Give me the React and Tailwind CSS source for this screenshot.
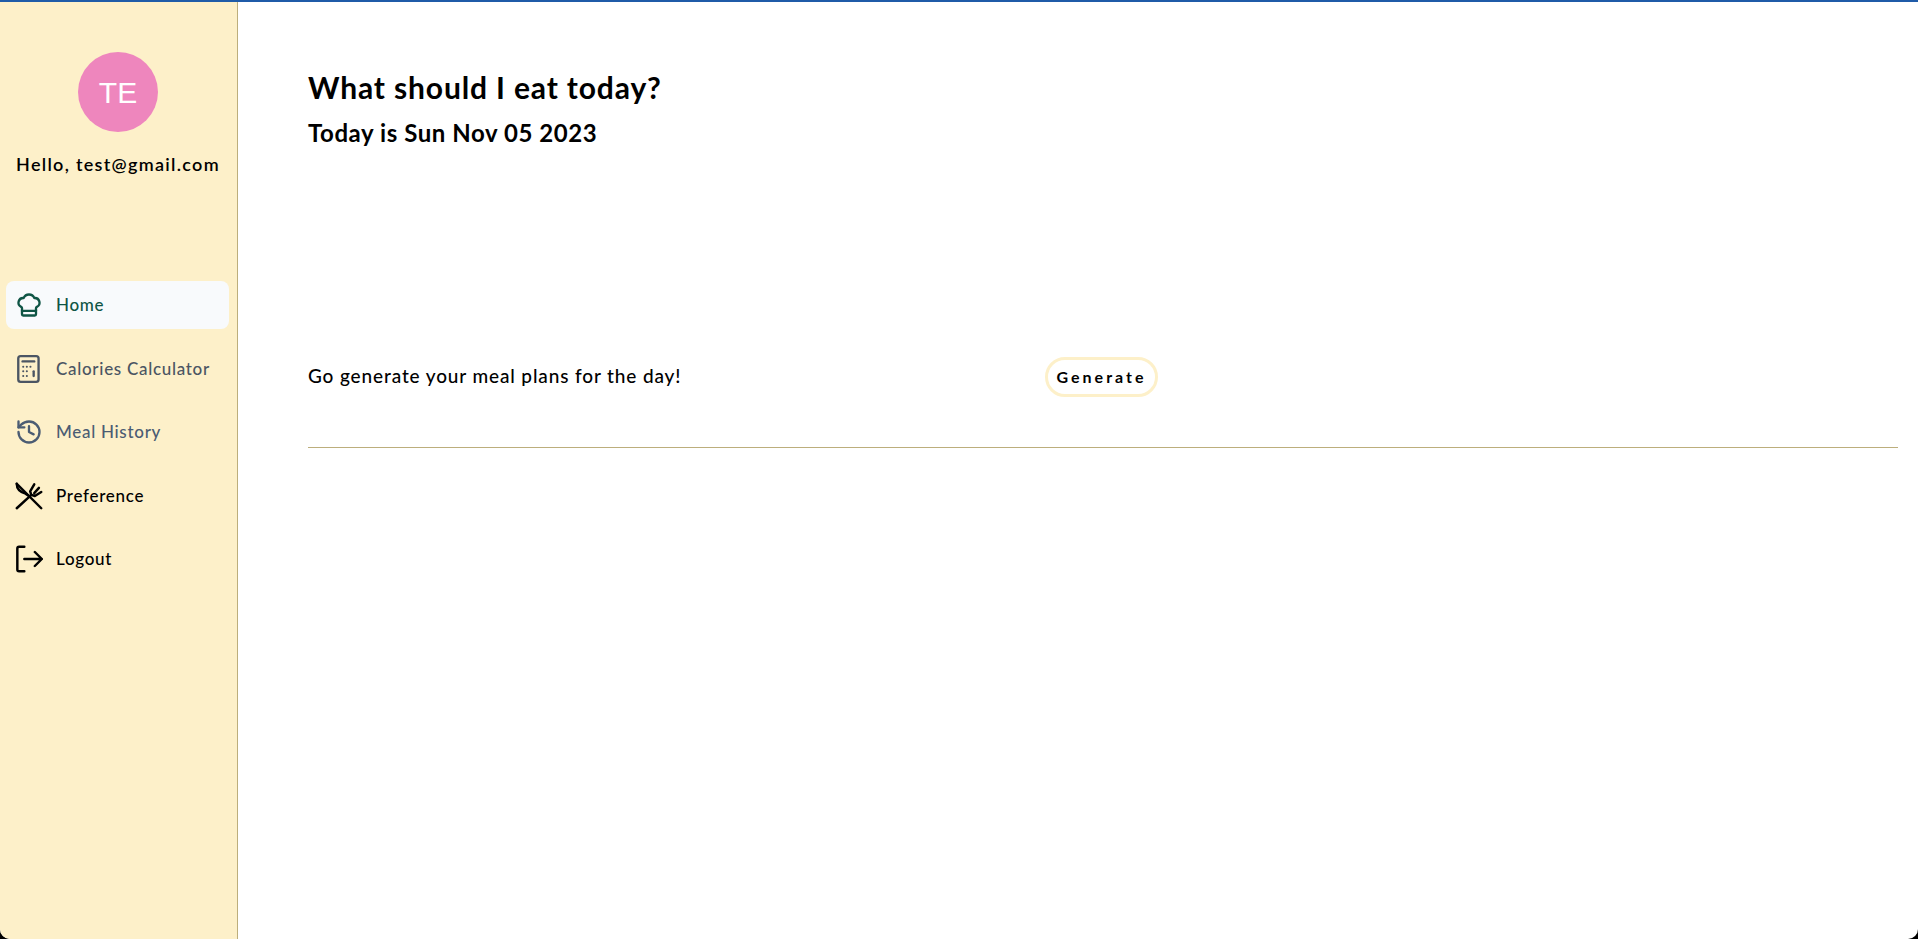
import React from "react";
import { ChefHat, History } from "lucide-react";

const CalculatorIcon = props => (
  <svg viewBox="0 0 24 24" fill="none" stroke="currentColor" strokeWidth="2" strokeLinecap="round" {...props}>
    <rect x="2.8" y="1" width="17.4" height="22" rx="2" />
    <path d="M6.5 5.5h10" />
    <path strokeWidth="1.7" strokeDasharray="0.1 3" d="M7 10h9M7 14h6M7 18h6" />
    <path d="M16 14v4" />
  </svg>
);

const ForkKnifeIcon = props => (
  <svg viewBox="0 0 24 24" fill="none" stroke="currentColor" strokeWidth="2.1" strokeLinecap="round" strokeLinejoin="round" {...props}>
    <path d="M1.5 1.5l21 21" />
    <path d="M1.5 1.5c0 4 2.5 7 7.5 8.5l3 2" />
    <path d="M1.5 22.5L14 11" />
    <path d="M14 11l-1-3 3.5-6M14 11l3 1 5.5-3.5M16.5 9.5l4-4.5" />
  </svg>
);

const LogoutIcon = props => (
  <svg viewBox="0 0 24 24" fill="none" stroke="currentColor" strokeWidth="2.1" strokeLinecap="round" strokeLinejoin="round" {...props}>
    <path d="M8 1.5H3.5a1.5 1.5 0 0 0-1.5 1.5v18a1.5 1.5 0 0 0 1.5 1.5H8" />
    <path d="M8 12h15M17 6l6 6-6 6" />
  </svg>
);

const navItems = [
  { label: "Home", Icon: ChefHat, className: "bg-[#f8fafc] text-[#0f5545]" },
  { label: "Calories Calculator", Icon: CalculatorIcon, className: "text-[#4b5563]" },
  { label: "Meal History", Icon: History, className: "text-[#4b5c73]" },
  { label: "Preference", Icon: ForkKnifeIcon, className: "text-black" },
  { label: "Logout", Icon: LogoutIcon, className: "text-black" },
];

const App = () => {
  return (
    <div className="h-screen bg-black font-['Lato',sans-serif]">
      <div className="flex h-full overflow-hidden rounded-b-[10px] border-t-2 border-[#1f5ba8] bg-white">
        <aside className="w-[238px] shrink-0 border-r border-[#bcae7c] bg-[#fdf0c9]">
          <div className="mt-[50px] flex flex-col items-center pr-[1px]">
            <div className="flex h-20 w-20 items-center justify-center rounded-full bg-[#ee86bd] font-['Liberation_Sans',sans-serif] text-[30px] text-white">
              TE
            </div>
            <p className="mt-[19px] text-[18px] leading-[27px] font-semibold tracking-[1.3px] text-black">Hello, test@gmail.com</p>
          </div>
          <nav className="mt-[103px] flex flex-col gap-[15.5px] pl-[6px] pr-[8px]">
            {navItems.map(({ label, Icon, className }) => (
              <a key={label} className={`flex h-12 items-center gap-[13px] rounded-lg pl-[9px] text-[17px] font-medium tracking-[0.7px] ${className}`}>
                <Icon className="h-[28px] w-[28px] shrink-0" />
                <span>{label}</span>
              </a>
            ))}
          </nav>
        </aside>
        <main className="min-w-0 flex-1 pl-[70px] pr-[20px] pt-[63px]">
          <h1 className="text-[30px] leading-[44px] font-bold tracking-[0.86px] text-black">What should I eat today?</h1>
          <h2 className="mt-[6px] text-[24px] leading-[36px] font-bold tracking-[0.56px] text-black">Today is Sun Nov 05 2023</h2>
          <div className="mt-[206px] flex items-start border-b border-[#bcae7c] pb-[50px]">
            <p className="w-[737px] text-[19px] leading-[38px] font-medium tracking-[0.87px] text-black">Go generate your meal plans for the day!</p>
            <button className="flex h-[40px] w-[113px] items-center justify-center rounded-full border-[3px] border-[#fdf0c9] bg-white text-[16px] font-bold tracking-[3px] text-black">
              Generate
            </button>
          </div>
        </main>
      </div>
    </div>
  );
};

export default App;
